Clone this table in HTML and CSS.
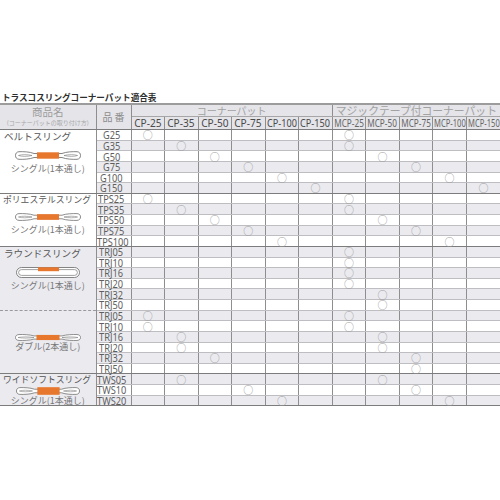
FILE: index.html
```html
<!DOCTYPE html>
<html lang="ja">
<head>
<meta charset="utf-8">
<title>トラスコスリングコーナーパット適合表</title>
<link rel="stylesheet" href="styles.css">
</head>
<body>
<h1 class="title">トラスコスリングコーナーパット適合表</h1>
<table class="chart">
  <colgroup>
    <col class="c-name"><col class="c-code">
    <col class="c-size"><col class="c-size"><col class="c-size"><col class="c-size"><col class="c-size"><col class="c-size">
    <col class="c-size"><col class="c-size"><col class="c-size"><col class="c-size"><col class="c-size">
  </colgroup>
  <thead>
    <tr class="h1">
      <th class="h-name" rowspan="2"><span class="h-name-main">商品名</span><span class="h-name-sub">(コーナーパットの取り付け方)</span></th>
      <th class="h-code" rowspan="2">品 番</th>
      <th class="h-group" colspan="6">コーナーパット</th>
      <th class="h-group h-group--magic" colspan="5">マジックテープ付コーナーパット</th>
    </tr>
    <tr class="h2">
      <th class="h-size"><div class="h-fit"><span>CP-25</span></div></th>
      <th class="h-size"><div class="h-fit"><span>CP-35</span></div></th>
      <th class="h-size"><div class="h-fit"><span>CP-50</span></div></th>
      <th class="h-size"><div class="h-fit"><span>CP-75</span></div></th>
      <th class="h-size h-size--long"><div class="h-fit"><span>CP-100</span></div></th>
      <th class="h-size h-size--long"><div class="h-fit"><span>CP-150</span></div></th>
      <th class="h-size h-size--magic"><div class="h-fit"><span>MCP-25</span></div></th>
      <th class="h-size h-size--magic"><div class="h-fit"><span>MCP-50</span></div></th>
      <th class="h-size h-size--magic"><div class="h-fit"><span>MCP-75</span></div></th>
      <th class="h-size h-size--magic h-size--long"><div class="h-fit"><span>MCP-100</span></div></th>
      <th class="h-size h-size--magic h-size--long"><div class="h-fit"><span>MCP-150</span></div></th>
    </tr>
  </thead>
  <tbody>
    <tr>
      <td class="sling sling--belt" rowspan="6">
        <div class="sling-name">ベルトスリング</div>
        <svg class="icon icon--belt" width="66" height="9" viewBox="0 0 66 9">
          <path d="M4 0.7C8 0.5 15 0.8 19 2.5H47C51 0.8 58 0.5 62 0.7C64.5 0.9 65.5 2.5 65.5 4.5C65.5 6.5 64.5 8.1 62 8.3C58 8.5 51 8.2 47 6.5H19C15 8.2 8 8.5 4 8.3C1.5 8.1 0.5 6.5 0.5 4.5C0.5 2.5 1.5 0.9 4 0.7Z" fill="#fff" stroke="#666" stroke-width="0.8"/>
          <path d="M3.5 4.5C7 3.3 12 3.4 17 4.5C12 5.6 7 5.7 3.5 4.5Z M62.5 4.5C59 3.3 54 3.4 49 4.5C54 5.6 59 5.7 62.5 4.5Z" fill="#fff" stroke="#777" stroke-width="0.6"/>
          <rect x="22" y="1.3" width="22" height="6.4" fill="#e8772e"/>
        </svg>
        <div class="sling-how">シングル(1本通し)</div>
      </td>
      <td class="code"><span>G25</span></td>
      <td class="fit">○</td><td></td><td></td><td></td><td></td><td></td><td class="fit">○</td><td></td><td></td><td></td><td></td>
    </tr>
    <tr>
      <td class="code"><span>G35</span></td>
      <td></td><td class="fit">○</td><td></td><td></td><td></td><td></td><td class="fit">○</td><td></td><td></td><td></td><td></td>
    </tr>
    <tr>
      <td class="code"><span>G50</span></td>
      <td></td><td></td><td class="fit">○</td><td></td><td></td><td></td><td></td><td class="fit">○</td><td></td><td></td><td></td>
    </tr>
    <tr>
      <td class="code"><span>G75</span></td>
      <td></td><td></td><td></td><td class="fit">○</td><td></td><td></td><td></td><td></td><td class="fit">○</td><td></td><td></td>
    </tr>
    <tr>
      <td class="code"><span>G100</span></td>
      <td></td><td></td><td></td><td></td><td class="fit">○</td><td></td><td></td><td></td><td></td><td class="fit">○</td><td></td>
    </tr>
    <tr class="group-end">
      <td class="code"><span>G150</span></td>
      <td></td><td></td><td></td><td></td><td></td><td class="fit">○</td><td></td><td></td><td></td><td></td><td class="fit">○</td>
    </tr>

    <tr>
      <td class="sling sling--poly" rowspan="5">
        <div class="sling-name sling-name--long">ポリエステルスリング</div>
        <svg class="icon icon--poly" width="66" height="8" viewBox="0 0 66 9" preserveAspectRatio="none">
          <path d="M4 0.7C8 0.5 15 0.8 19 2.5H47C51 0.8 58 0.5 62 0.7C64.5 0.9 65.5 2.5 65.5 4.5C65.5 6.5 64.5 8.1 62 8.3C58 8.5 51 8.2 47 6.5H19C15 8.2 8 8.5 4 8.3C1.5 8.1 0.5 6.5 0.5 4.5C0.5 2.5 1.5 0.9 4 0.7Z" fill="#fff" stroke="#666" stroke-width="0.8"/>
          <path d="M3.5 4.5C7 3.3 12 3.4 17 4.5C12 5.6 7 5.7 3.5 4.5Z M62.5 4.5C59 3.3 54 3.4 49 4.5C54 5.6 59 5.7 62.5 4.5Z" fill="#fff" stroke="#777" stroke-width="0.6"/>
          <rect x="22" y="1.3" width="22" height="6.4" fill="#e8772e"/>
        </svg>
        <div class="sling-how">シングル(1本通し)</div>
      </td>
      <td class="code"><span>TPS25</span></td>
      <td class="fit">○</td><td></td><td></td><td></td><td></td><td></td><td class="fit">○</td><td></td><td></td><td></td><td></td>
    </tr>
    <tr>
      <td class="code"><span>TPS35</span></td>
      <td></td><td class="fit">○</td><td></td><td></td><td></td><td></td><td class="fit">○</td><td></td><td></td><td></td><td></td>
    </tr>
    <tr>
      <td class="code"><span>TPS50</span></td>
      <td></td><td></td><td class="fit">○</td><td></td><td></td><td></td><td></td><td class="fit">○</td><td></td><td></td><td></td>
    </tr>
    <tr>
      <td class="code"><span>TPS75</span></td>
      <td></td><td></td><td></td><td class="fit">○</td><td></td><td></td><td></td><td></td><td class="fit">○</td><td></td><td></td>
    </tr>
    <tr class="group-end">
      <td class="code"><span>TPS100</span></td>
      <td></td><td></td><td></td><td></td><td class="fit">○</td><td></td><td></td><td></td><td></td><td class="fit">○</td><td></td>
    </tr>

    <tr>
      <td class="sling sling--round" rowspan="6">
        <div class="sling-name">ラウンドスリング</div>
        <svg class="icon icon--round" width="64" height="11" viewBox="0 0 64 11">
          <rect x="0.5" y="0.5" width="63" height="10" rx="5" fill="#fff" stroke="#666" stroke-width="0.8"/>
          <rect x="2.6" y="2.6" width="58.8" height="5.8" rx="2.9" fill="#fff" stroke="#777" stroke-width="0.7"/>
          <rect x="22" y="0.3" width="21" height="3.9" fill="#e8772e"/>
        </svg>
        <div class="sling-how">シングル(1本通し)</div>
      </td>
      <td class="code"><span>TRJ05</span></td>
      <td></td><td></td><td></td><td></td><td></td><td></td><td class="fit">○</td><td></td><td></td><td></td><td></td>
    </tr>
    <tr>
      <td class="code"><span>TRJ10</span></td>
      <td></td><td></td><td></td><td></td><td></td><td></td><td class="fit">○</td><td></td><td></td><td></td><td></td>
    </tr>
    <tr>
      <td class="code"><span>TRJ16</span></td>
      <td></td><td></td><td></td><td></td><td></td><td></td><td class="fit">○</td><td></td><td></td><td></td><td></td>
    </tr>
    <tr>
      <td class="code"><span>TRJ20</span></td>
      <td></td><td></td><td></td><td></td><td></td><td></td><td class="fit">○</td><td></td><td></td><td></td><td></td>
    </tr>
    <tr>
      <td class="code"><span>TRJ32</span></td>
      <td></td><td></td><td></td><td></td><td></td><td></td><td></td><td class="fit">○</td><td></td><td></td><td></td>
    </tr>
    <tr>
      <td class="code"><span>TRJ50</span></td>
      <td></td><td></td><td></td><td></td><td></td><td></td><td></td><td class="fit">○</td><td></td><td></td><td></td>
    </tr>

    <tr>
      <td class="sling sling--double" rowspan="6">
        <svg class="icon icon--double" width="66" height="7" viewBox="0 0 66 9" preserveAspectRatio="none">
          <path d="M4 0.7C8 0.5 15 0.8 19 2.5H47C51 0.8 58 0.5 62 0.7C64.5 0.9 65.5 2.5 65.5 4.5C65.5 6.5 64.5 8.1 62 8.3C58 8.5 51 8.2 47 6.5H19C15 8.2 8 8.5 4 8.3C1.5 8.1 0.5 6.5 0.5 4.5C0.5 2.5 1.5 0.9 4 0.7Z" fill="#fff" stroke="#666" stroke-width="0.8"/>
          <path d="M3 4.5C8 3.4 14 3.5 19 4.5C14 5.5 8 5.6 3 4.5Z M63 4.5C58 3.4 52 3.5 47 4.5C52 5.5 58 5.6 63 4.5Z" fill="#fff" stroke="#777" stroke-width="0.6"/>
          <rect x="21.5" y="1.2" width="23" height="6.6" fill="#e8772e"/>
        </svg>
        <div class="sling-how">ダブル(2本通し)</div>
      </td>
      <td class="code"><span>TRJ05</span></td>
      <td class="fit">○</td><td></td><td></td><td></td><td></td><td></td><td class="fit">○</td><td></td><td></td><td></td><td></td>
    </tr>
    <tr>
      <td class="code"><span>TRJ10</span></td>
      <td class="fit">○</td><td></td><td></td><td></td><td></td><td></td><td class="fit">○</td><td></td><td></td><td></td><td></td>
    </tr>
    <tr>
      <td class="code"><span>TRJ16</span></td>
      <td></td><td class="fit">○</td><td></td><td></td><td></td><td></td><td></td><td class="fit">○</td><td></td><td></td><td></td>
    </tr>
    <tr>
      <td class="code"><span>TRJ20</span></td>
      <td></td><td class="fit">○</td><td></td><td></td><td></td><td></td><td></td><td class="fit">○</td><td></td><td></td><td></td>
    </tr>
    <tr>
      <td class="code"><span>TRJ32</span></td>
      <td></td><td></td><td class="fit">○</td><td></td><td></td><td></td><td></td><td></td><td class="fit">○</td><td></td><td></td>
    </tr>
    <tr class="group-end">
      <td class="code"><span>TRJ50</span></td>
      <td></td><td></td><td></td><td></td><td></td><td></td><td></td><td></td><td class="fit">○</td><td></td><td></td>
    </tr>

    <tr>
      <td class="sling sling--wide" rowspan="3">
        <div class="sling-name sling-name--long">ワイドソフトスリング</div>
        <svg class="icon icon--wide" width="64" height="8" viewBox="0 0 66 9" preserveAspectRatio="none">
          <path d="M4 0.7C8 0.5 15 0.8 19 2.5H47C51 0.8 58 0.5 62 0.7C64.5 0.9 65.5 2.5 65.5 4.5C65.5 6.5 64.5 8.1 62 8.3C58 8.5 51 8.2 47 6.5H19C15 8.2 8 8.5 4 8.3C1.5 8.1 0.5 6.5 0.5 4.5C0.5 2.5 1.5 0.9 4 0.7Z" fill="#fff" stroke="#666" stroke-width="0.8"/>
          <path d="M3.5 4.5C7 3.3 12 3.4 17 4.5C12 5.6 7 5.7 3.5 4.5Z M62.5 4.5C59 3.3 54 3.4 49 4.5C54 5.6 59 5.7 62.5 4.5Z" fill="#fff" stroke="#777" stroke-width="0.6"/>
          <rect x="22" y="0.2" width="23" height="8.6" fill="#e8772e"/>
        </svg>
        <div class="sling-how sling-how--tight">シングル(1本通し)</div>
      </td>
      <td class="code"><span>TWS05</span></td>
      <td></td><td class="fit">○</td><td></td><td></td><td></td><td></td><td></td><td class="fit">○</td><td></td><td></td><td></td>
    </tr>
    <tr>
      <td class="code"><span>TWS10</span></td>
      <td></td><td></td><td></td><td class="fit">○</td><td></td><td></td><td></td><td></td><td class="fit">○</td><td></td><td></td>
    </tr>
    <tr class="group-end">
      <td class="code"><span>TWS20</span></td>
      <td></td><td></td><td></td><td></td><td class="fit">○</td><td></td><td></td><td></td><td></td><td class="fit">○</td><td></td>
    </tr>
  </tbody>
</table>
</body>
</html>
```
FILE: styles.css
```css
html, body {
  margin: 0;
  padding: 0;
  background: #fff;
}

body {
  font-family: "Noto Sans CJK JP", "Noto Sans", sans-serif;
  color: #555;
}

.title {
  margin: 0;
  padding: 91px 0 0 2px;
  height: 12px;
  font-size: 8.6px;
  line-height: 12px;
  font-weight: 700;
  color: #2e2e2e;
  white-space: nowrap;
}

.chart {
  width: 500px;
  table-layout: fixed;
  border-collapse: collapse;
}

.c-name { width: 96px; }
.c-code { width: 35px; }
.c-size { width: 33.54px; }

/* ---------- header ---------- */
.chart th {
  padding: 0;
  background: #e4e4e9;
  font-weight: 400;
  border-right: 1px solid #8e8e8e;
  white-space: nowrap;
}

.h1 th {
  border-top: 2px solid #9c9c9c;
  height: 11px;
}

.h2 th {
  height: 12px;
  border-bottom: 1px solid #7c7c7c;
}

.h-name {
  vertical-align: top;
  border-bottom: 1px solid #7c7c7c;
}

.h-name-main {
  display: block;
  margin-top: 1px;
  font-size: 10.5px;
  line-height: 12px;
  color: #9c9c9c;
}

.h-name-sub {
  display: block;
  font-size: 6px;
  line-height: 9px;
  color: #a8a8a8;
}

.h-code {
  vertical-align: middle;
  font-size: 10px;
  line-height: 12px;
  color: #8c8c8c;
  border-bottom: 1px solid #7c7c7c;
}

.h-group {
  font-size: 10px;
  line-height: 11px;
  color: #a2a2a2;
  border-bottom: 1px solid #a6a6a6;
}

.h-group--magic {
  font-size: 10.8px;
}

.h-size {
  font-family: "Noto Sans", sans-serif;
  font-size: 11px;
  line-height: 12px;
  color: #4a4a4a;
  vertical-align: bottom;
}

.h-fit {
  display: flex;
  justify-content: center;
}

.h-fit span {
  flex: none;
  transform: scaleX(0.92);
}

.h-size--long .h-fit span {
  transform: scaleX(0.83);
}

.h-size--magic {
  font-size: 10px;
  color: #666;
}

.h-size--magic .h-fit span {
  transform: scaleX(0.82);
}

.h-size--magic.h-size--long .h-fit span {
  transform: scaleX(0.76);
}

.chart th:last-child,
.chart td:last-child {
  border-right: none;
}

/* ---------- body ---------- */
.chart tbody tr {
  height: 10.63px;
}

.chart td {
  padding: 0;
  line-height: 9px;
  text-align: center;
  vertical-align: middle;
  border-right: 1px solid #8e8e8e;
  border-bottom: 1px solid #bdbdc2;
}

.chart tbody tr:nth-child(even) td {
  background: #eaeaef;
}

.chart .group-end td {
  border-bottom-color: #7c7c7c;
}

.code {
  text-align: left;
  padding-left: 3px;
  font-family: "Noto Sans", sans-serif;
  font-size: 11px;
  color: #5e5e5e;
  white-space: nowrap;
}

.code span {
  position: relative;
  z-index: 1;
  display: inline-block;
  transform: scaleX(0.84);
  transform-origin: left center;
}

.fit {
  font-size: 10px;
  color: #9a9a9a;
}

/* ---------- sling description cells ---------- */
.chart td.sling {
  vertical-align: top;
  text-align: center;
  background: #fff;
  border-bottom: 1px solid #7c7c7c;
  line-height: normal;
}

.chart td.sling--round {
  border-bottom: 1px dashed #9a9a9a;
}

.sling-name {
  text-align: left;
  padding-left: 4px;
  font-size: 9.6px;
  line-height: 12px;
  color: #555;
  white-space: nowrap;
}

.sling-name--long {
  padding-left: 3px;
  font-size: 8.8px;
}

.icon {
  display: block;
  margin: 0 auto;
}

.sling-how {
  font-size: 9px;
  line-height: 10px;
  color: #777;
  white-space: nowrap;
}

.sling-how--tight {
  margin-bottom: -5px;
}

.icon--belt { margin-top: 9px; margin-bottom: 4px; }
.icon--poly { margin-top: 7px; margin-bottom: 4px; }
.icon--round { margin-top: 8px; margin-bottom: 3px; }
.icon--double { margin-top: 23px; margin-bottom: 1px; }
.icon--wide { margin-top: 1px; margin-bottom: 1px; }
```
